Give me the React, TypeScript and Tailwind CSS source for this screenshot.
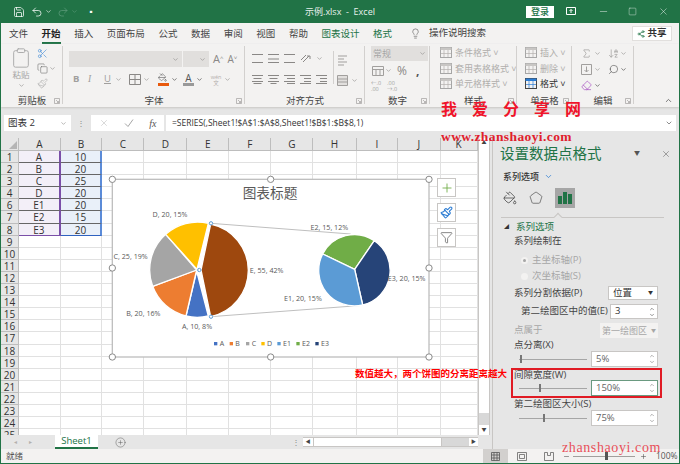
import React from "react";
import {
  ArrowDownAZ,
  ChevronDown,
  ChevronUp,
  CirclePlus,
  Clipboard,
  Copy,
  Eraser,
  Filter,
  Lightbulb,
  Minus,
  PaintBucket,
  Paintbrush,
  Pentagon,
  Plus,
  Redo2,
  Save,
  Scissors,
  Search,
  Share2,
  Sigma,
  Square,
  Undo2,
  X,
} from "lucide-react";

const tabs = ["文件", "开始", "插入", "页面布局", "公式", "数据", "审阅", "视图", "帮助", "图表设计", "格式"];
const columns = ["A", "B", "C", "D", "E", "F", "G", "H", "I", "J", "K"];
const rows = [1, 2, 3, 4, 6, 7, 8, 9, 10, 11, 12, 13, 14, 15, 16, 17, 18, 19, 20, 21, 22, 23, 24, 25];
const data = [
  ["A", "10"],
  ["B", "20"],
  ["C", "25"],
  ["D", "20"],
  ["E1", "20"],
  ["E2", "15"],
  ["E3", "20"],
];
const legend = [
  { name: "A", color: "#4472c4", x: 342 },
  { name: "B", color: "#ed7d31", x: 389 },
  { name: "C", color: "#a5a5a5", x: 438 },
  { name: "D", color: "#ffc000", x: 484 },
  { name: "E1", color: "#5b9bd5", x: 532 },
  { name: "E2", color: "#70ad47", x: 589 },
  { name: "E3", color: "#264478", x: 646 },
];
const labels = [
  { text: "D, 20, 15%", x: 210, y: 142 },
  { text: "C, 25, 19%", x: 92, y: 267 },
  { text: "B, 20, 16%", x: 130, y: 439 },
  { text: "A, 10, 8%", x: 291, y: 477 },
  { text: "E, 55, 42%", x: 500, y: 309 },
  { text: "E2, 15, 12%", x: 688, y: 179 },
  { text: "E1, 20, 15%", x: 609, y: 392 },
  { text: "E3, 20, 15%", x: 920, y: 332 },
];
const handles = [
  [37, 28],
  [512, 28],
  [987, 28],
  [37, 294],
  [987, 294],
  [37, 561],
  [512, 561],
  [987, 561],
];

// 水平线条图标（对齐方式那一组）
const Lines = ({ widths, right }: { widths: number[]; right?: boolean }) => (
  <svg width="11" height="11" viewBox="0 0 11 11" className="text-[#8a8886]">
    {widths.map((w, i) => (
      <rect
        key={i}
        x={right ? 11 - w : (11 - w) / 2}
        y={1 + i * (9 / Math.max(widths.length - 1, 1)) - (i === widths.length - 1 ? 1 : 0)}
        width={w}
        height="1"
        fill="currentColor"
      />
    ))}
  </svg>
);

const Caret = ({ className = "" }: { className?: string }) => (
  <ChevronDown size={7} strokeWidth={2} className={`text-[#8a8886] shrink-0 ${className}`} />
);

const Launcher = () => (
  <svg width="6" height="6" viewBox="0 0 6 6" className="absolute right-[3px] bottom-[3px] text-[#a19f9d]">
    <path d="M0.5 0.5H5.5V5.5H0.5ZM2 2L4.5 4.5M4.5 3V4.5H3" fill="none" stroke="currentColor" strokeWidth="0.7" />
  </svg>
);

const Group = ({ label, width, children }: { label: string; width: string; children: React.ReactNode }) => (
  <div className={`relative flex flex-col shrink-0 ${width}`}>
    <div className="flex-1 min-h-0">{children}</div>
    <div className="h-[12px] text-center text-[9.5px] leading-[12px] text-[#444]">{label}</div>
    <Launcher />
    <div className="absolute right-0 top-[2px] bottom-[3px] w-px bg-[#d2d0ce]" />
  </div>
);

const StyleRow = ({ label, dark }: { label: string; dark?: boolean }) => (
  <div className={`flex items-center h-[15.5px] gap-[3px] text-[9px] ${dark ? "text-[#333]" : "text-[#b0aeac]"}`}>
    <svg width="12" height="11" viewBox="0 0 12 11" className="shrink-0">
      <rect x="0.5" y="0.5" width="11" height="10" fill="none" stroke={dark ? "#444" : "#a6a6a6"} />
      <rect x="0.5" y="0.5" width="11" height="2.5" fill={dark ? "#2b7cd3" : "#c8c6c4"} />
      <path d="M4 3V10M8 3V10M1 6.5H11" stroke={dark ? "#2b7cd3" : "#b3b0ad"} strokeWidth="0.7" />
    </svg>
    <span className="whitespace-nowrap">{label}</span>
  </div>
);

const Spinner = ({ value, active }: { value: string; active?: boolean }) => (
  <div
    className={`flex items-center justify-between h-[16px] w-[67px] bg-white border pl-[4px] pr-[2px] text-[9.5px] text-[#666] ${
      active ? "border-[#6a9a80]" : "border-[#c8c6c4]"
    }`}
  >
    <span>{value}</span>
    <div className="flex flex-col text-[#666]">
      <ChevronUp size={6} strokeWidth={2} />
      <ChevronDown size={6} strokeWidth={2} />
    </div>
  </div>
);

const Slider = ({ thumb }: { thumb: string }) => (
  <div className="relative ml-[5px] w-[68px] h-[16px] flex items-center">
    <div className="w-full h-px bg-[#a6a6a6]" />
    <div className={`absolute top-[4px] h-[8px] w-[2px] bg-[#777] ${thumb}`} />
  </div>
);

const Chart = () => (
  <div className="absolute left-[99px] top-[170px] w-[356px] h-[200px]">
    <svg width="350" height="200" viewBox="0 0 1050 600" className="absolute left-0 top-0">
      <rect x="37" y="28" width="950" height="533" fill="#fff" stroke="#bfbfbf" strokeWidth="4" />
      <text x="510" y="85" textAnchor="middle" fontSize="41" fill="#595959">
        图表标题
      </text>
      <path d="M333 160L752 192M333 440L788 406" stroke="#bfbfbf" strokeWidth="3" fill="none" />
      <g stroke="#fff" strokeWidth="4" strokeLinejoin="round">
        <path d="M290 303L258 438A142 142 0 0 0 325 438Z" fill="#4472c4" />
        <path d="M290 300L158 349A142 142 0 0 0 258 438Z" fill="#ed7d31" />
        <path d="M290 300L197 193A142 142 0 0 0 158 349Z" fill="#a5a5a5" />
        <path d="M291 298L325 160A142 142 0 0 0 197 193Z" fill="#ffc000" />
        <path d="M303 300L332 162A142 142 0 0 1 332 440Z" fill="#9e480e" />
        <path d="M764 298L668 252A107 107 0 0 1 823 212Z" fill="#70ad47" />
        <path d="M764 298L823 212A107 107 0 0 1 788 405Z" fill="#264478" />
        <path d="M764 298L788 405A107 107 0 0 1 668 252Z" fill="#5b9bd5" />
      </g>
      {labels.map((l) => (
        <text key={l.text} x={l.x} y={l.y} textAnchor="middle" fontSize="21.5" fill="#595959">
          {l.text}
        </text>
      ))}
      {legend.map((l) => (
        <g key={l.name}>
          <rect x={l.x} y="516" width="10" height="10" fill={l.color} />
          <text x={l.x + 17} y="527" fontSize="21" fill="#595959">
            {l.name}
          </text>
        </g>
      ))}
      {[
        [333, 160],
        [333, 440],
        [298, 300],
      ].map(([cx, cy]) => (
        <circle key={`${cx}-${cy}`} cx={cx} cy={cy} r="5" fill="#fff" stroke="#5b9bd5" strokeWidth="3" />
      ))}
      {handles.map(([cx, cy]) => (
        <circle key={`${cx}-${cy}`} cx={cx} cy={cy} r="9.5" fill="#fff" stroke="#8a8a8a" strokeWidth="3" />
      ))}
    </svg>
    <div className="absolute left-[337px] top-[8px] flex flex-col gap-[6px]">
      <div className="flex items-center justify-center w-[19px] h-[19px] bg-white border border-[#c8c6c4]">
        <Plus size={14} strokeWidth={1.5} className="text-[#70ad47]" />
      </div>
      <div className="flex items-center justify-center w-[19px] h-[19px] bg-white border border-[#c8c6c4]">
        <Paintbrush size={13} strokeWidth={2} className="text-[#2b7cd3]" />
      </div>
      <div className="flex items-center justify-center w-[19px] h-[19px] bg-white border border-[#c8c6c4]">
        <Filter size={13} strokeWidth={1.3} className="text-[#555]" />
      </div>
    </div>
  </div>
);

const App: React.FC = () => {
  return (
    <div className="relative flex flex-col w-[680px] h-[464px] overflow-hidden bg-[#e6e6e6] border-x border-b border-[#217346] font-['Open_Sans','Noto_Sans_CJK_SC',sans-serif] text-[#444]">
      {/* 标题栏 */}
      <div className="relative flex items-center h-[23px] shrink-0 -mx-px bg-[#217346] text-white">
        <Save size={12} strokeWidth={1.5} className="ml-[13px]" />
        <Undo2 size={12} strokeWidth={1.5} className="ml-[6px]" />
        <ChevronDown size={7} className="ml-[2px]" />
        <Redo2 size={12} strokeWidth={1.5} className="ml-[5px] text-[#5d9b7b]" />
        <ChevronDown size={7} className="ml-[2px] text-[#5d9b7b]" />
        <span className="ml-[9px] text-[8px] leading-none">▪</span>
        <div className="absolute left-0 right-0 text-center text-[9px] text-[#e8f0ec]">示例.xlsx&nbsp; -&nbsp; Excel</div>
        <div className="ml-auto flex items-center">
          <div className="flex items-center justify-center w-[28px] h-[12px] mr-[12px] bg-white text-[9px] font-medium text-[#217346]">
            登录
          </div>
          <svg width="10" height="9" viewBox="0 0 10 9" className="mr-[22px]">
            <path d="M0.5 0.5H9.5V7.5H0.5ZM5 6V2.5M3.5 4L5 2.5L6.5 4" fill="none" stroke="#fff" strokeWidth="1" />
          </svg>
          <Minus size={11} strokeWidth={1} className="mr-[19px]" />
          <Square size={9} strokeWidth={1} className="mr-[21px]" />
          <X size={11} strokeWidth={1} className="mr-[11px]" />
        </div>
      </div>

      {/* 选项卡 */}
      <div className="flex items-center h-[21px] shrink-0 bg-[#f3f2f1] pl-[8px] text-[9.5px]">
        <div className="flex gap-[13.6px]">
          {tabs.map((t) => (
            <span
              key={t}
              className={`relative leading-[21px] ${t === "开始" ? "font-bold text-[#222]" : ""} ${
                t === "图表设计" || t === "格式" ? "text-[#217346]" : ""
              }`}
            >
              {t}
              {t === "开始" && <span className="absolute left-0 right-0 bottom-0 h-[2px] bg-[#217346]" />}
            </span>
          ))}
        </div>
        <Lightbulb size={11} strokeWidth={1.2} className="ml-[18px]" />
        <span className="ml-[8px]">操作说明搜索</span>
        <div className="ml-auto mr-[7px] flex items-center justify-center gap-[2px] w-[40px] h-[15px] bg-white border border-[#e1dfdd] font-bold text-[#333]">
          <Share2 size={8} className="text-[#217346]" />
          共享
        </div>
      </div>

      {/* 功能区 */}
      <div className="relative flex h-[63px] shrink-0 bg-[#f3f2f1] shadow-[0_1px_2px_#c8c6c4]">
        <Group label="剪贴板" width="w-[62px]">
          <div className="flex pl-[10px] pt-[3px] text-[#a6a6a6]">
            <div className="flex flex-col items-center w-[20px]">
              <Clipboard size={22} strokeWidth={1} />
              <span className="text-[8.5px] leading-[12px]">粘贴</span>
              <Caret className="mt-[1px]" />
            </div>
            <div className="flex flex-col gap-[4px] ml-[6px] pt-[1px] text-[#666]">
              <Scissors size={11} strokeWidth={1.2} className="text-[#2b7cd3]" />
              <div className="flex items-center gap-[1px]">
                <Copy size={11} strokeWidth={1.2} />
                <Caret />
              </div>
              <Paintbrush size={11} strokeWidth={1.2} className="text-[#a6a6a6]" />
            </div>
          </div>
        </Group>
        <Group label="字体" width="w-[182px]">
          <div className="pl-[6px] pt-[7px]">
            <div className="flex items-center gap-[1px]">
              <div className="flex items-center justify-end w-[113px] h-[16px] pr-[3px] bg-[#e1dfdd]">
                <Caret />
              </div>
              <div className="flex items-center justify-end w-[26px] h-[16px] pr-[3px] bg-[#e1dfdd]">
                <Caret />
              </div>
              <span className="ml-[3px] text-[11px] text-[#8a8886]">
                A<sup className="text-[6px]">^</sup>
              </span>
              <span className="ml-[3px] text-[10px] text-[#8a8886]">
                A<sup className="text-[6px]">˅</sup>
              </span>
            </div>
            <div className="flex items-center mt-[4px] h-[16px] text-[#a19f9d]">
              <span className="ml-[4px] w-[15px] text-[9.5px] font-bold">B</span>
              <span className="w-[16px] text-[9.5px] italic font-['Liberation_Serif',serif]">I</span>
              <span className="w-[11px] text-[9.5px] underline">U</span>
              <Caret />
              <svg width="12" height="11" viewBox="0 0 12 11" className="ml-[7px]">
                <path d="M0.5 0.5H11.5V10.5H0.5ZM6 0.5V10.5M0.5 5.5H11.5" fill="none" stroke="#8a8886" />
              </svg>
              <Caret className="ml-[2px]" />
              <div className="relative ml-[8px] w-[11px] h-[13px]">
                <PaintBucket size={9} strokeWidth={1.5} className="text-[#555]" />
                <div className="absolute left-0 right-0 bottom-0 h-[3px] bg-[#e8590c]" />
              </div>
              <ChevronDown size={7} strokeWidth={2} className="ml-[2px] text-[#333]" />
              <div className="relative ml-[5px] w-[11px] h-[13px] text-center text-[10px] leading-[10px] text-[#555]">
                A
                <div className="absolute left-0 right-0 bottom-0 h-[3px] bg-[#999]" />
              </div>
              <ChevronDown size={7} strokeWidth={2} className="ml-[2px] text-[#333]" />
              <span className="ml-[7px] w-[12px] text-center text-[5.5px] leading-[6px] text-[#b3b0ad]">
                wén
                <br />文
              </span>
              <Caret className="ml-[2px]" />
            </div>
          </div>
        </Group>
        <Group label="对齐方式" width="w-[120px]">
          <div className="flex pt-[9px] pl-[7px]">
            <div className="flex flex-col gap-[10px] w-[81px]">
              <div className="flex items-center gap-[5px] h-[11px]">
                <Lines widths={[11, 11]} />
                <Lines widths={[11, 11, 11]} />
                <Lines widths={[11, 11]} />
                <svg width="11" height="11" viewBox="0 0 11 11">
                  <path d="M1 7L6 2M3 9L9 3M7 3H10V6" fill="none" stroke="#8a8886" />
                </svg>
                <Caret />
              </div>
              <div className="flex items-center gap-[5px] h-[11px]">
                <Lines widths={[11, 8, 11, 8]} />
                <Lines widths={[11, 8, 11, 6]} />
                <Lines widths={[11, 8, 11, 8]} right />
                <Lines widths={[11, 7, 7, 11]} right />
                <Lines widths={[11, 7, 7, 11]} right />
              </div>
            </div>
            <div className="w-px h-[33px] -mt-[2px] bg-[#d2d0ce]" />
            <div className="flex flex-col gap-[8px] pl-[3px] pt-[1px]">
              <svg width="11" height="13" viewBox="0 0 11 13">
                <path d="M1 2H10M1 5H7M1 8H10M1 11H7" stroke="#a19f9d" />
              </svg>
              <div className="flex items-center gap-[3px]">
                <svg width="11" height="11" viewBox="0 0 11 11">
                  <path d="M0.5 0.5H10.5V10.5H0.5ZM0.5 4H10.5M0.5 7H10.5" fill="#e1dfdd" stroke="#a19f9d" />
                </svg>
                <Caret />
              </div>
            </div>
          </div>
        </Group>
        <Group label="数字" width="w-[65px]">
          <div className="pt-[2px] pl-[6px]">
            <div className="flex items-center justify-between w-[57px] h-[15px] px-[2px] bg-[#e1dfdd] text-[9px] text-[#a6a6a6]">
              常规
              <Caret />
            </div>
            <div className="flex items-center h-[17px] mt-[1px] text-[#8a8886]">
              <svg width="12" height="10" viewBox="0 0 12 10" className="ml-[1px]">
                <path d="M0.5 0.5H11.5V9.5H0.5ZM0.5 3.5H11.5M4 3.5V9.5M8 3.5V9.5" fill="none" stroke="#a19f9d" />
              </svg>
              <Caret className="ml-[1px]" />
              <span className="ml-[5px] text-[12px] leading-none">%</span>
              <span className="ml-[9px] text-[12px] font-bold leading-none text-[#555]">,</span>
            </div>
            <div className="flex items-center gap-[6px] h-[14px] text-[5.5px] leading-[6px] text-[#a19f9d]">
              <span>
                ←.0
                <br />
                .00
              </span>
              <span>
                .00
                <br />
                →.0
              </span>
            </div>
          </div>
        </Group>
        <Group label="样式" width="w-[87px]">
          <div className="pl-[10px] pt-[1px]">
            <StyleRow label="条件格式 ˅" />
            <StyleRow label="套用表格格式 ˅" />
            <StyleRow label="单元格样式 ˅" />
          </div>
        </Group>
        <Group label="单元格" width="w-[55px]">
          <div className="pl-[8px] pt-[1px]">
            <StyleRow label="插入 ˅" />
            <StyleRow label="删除 ˅" />
            <StyleRow label="格式 ˅" dark />
          </div>
        </Group>
        <Group label="编辑" width="w-[62px]">
          <div className="grid grid-cols-2 gap-y-[4px] pl-[9px] pt-[3px] text-[#8a8886]">
            <div className="flex items-center gap-[2px] h-[12px]">
              <Sigma size={11} strokeWidth={1.2} />
              <Caret />
            </div>
            <div className="flex items-center gap-[1px] h-[12px]">
              <ArrowDownAZ size={11} strokeWidth={1.2} />
              <Caret />
            </div>
            <div className="flex items-center gap-[2px] h-[12px]">
              <svg width="11" height="11" viewBox="0 0 11 11">
                <path d="M0.5 0.5H10.5V10.5H0.5ZM5.5 2.5V8M3.5 6L5.5 8L7.5 6" fill="none" stroke="#a19f9d" />
              </svg>
              <Caret />
            </div>
            <div className="flex items-center gap-[1px] h-[12px]">
              <Search size={11} strokeWidth={1.2} className="-scale-x-100 text-[#444]" />
              <ChevronDown size={7} strokeWidth={2} className="text-[#333]" />
            </div>
            <div className="flex items-center gap-[2px] h-[12px]">
              <Eraser size={11} strokeWidth={1.5} className="text-[#a64dc0]" />
              <ChevronDown size={7} strokeWidth={2} className="text-[#333]" />
            </div>
          </div>
        </Group>
        <ChevronUp size={9} className="absolute right-[6px] bottom-[2px] text-[#555]" />
      </div>

      {/* 编辑栏 */}
      <div className="flex items-center h-[16px] mt-[8px] shrink-0 pl-[3px] pr-[3px]">
        <div className="flex items-center justify-between w-[67px] h-full px-[4px] bg-white text-[9.5px] text-[#333]">
          图表 2
          <Caret />
        </div>
        <div className="w-[20px] text-center text-[8px] leading-none text-[#8a8886]">⋮</div>
        <div className="flex items-center justify-around w-[73px] h-full bg-white text-[#a6a6a6]">
          <X size={10} strokeWidth={1} />
          <svg width="10" height="10" viewBox="0 0 10 10">
            <path d="M1 5.5L4 8.5L9 1.5" fill="none" stroke="#a6a6a6" />
          </svg>
          <span className="font-['Liberation_Serif',serif] italic text-[10px] text-[#555]">fx</span>
        </div>
        <div className="flex items-center justify-between flex-1 h-full ml-[2px] pl-[6px] pr-[3px] bg-white text-[8.5px] text-[#333]">
          =SERIES(,Sheet1!$A$1:$A$8,Sheet1!$B$1:$B$8,1)
          <ChevronDown size={8} strokeWidth={2} className="text-[#555]" />
        </div>
      </div>

      {/* 工作表和窗格 */}
      <div className="flex flex-1 min-h-0 mt-[7px]">
        <div className="flex flex-col w-[490px] shrink-0">
          <div className="flex h-[297px] shrink-0">
            <div className="grid w-[477px] h-full overflow-hidden bg-white content-start grid-cols-[18px_41.6px_41.7px_42px_43px_42px_42px_42px_43.4px_41.6px_42.4px_37px] grid-rows-[13px] auto-rows-[12.1px] text-[10px] leading-[12px]">
              <div className="relative bg-[#e6e6e6] border-r border-b border-[#bdbdbd]">
                <div className="absolute right-[1px] bottom-[1px] w-0 h-0 border-l-[8px] border-t-[8px] border-l-transparent border-t-transparent border-r-0 border-b-[8px] border-b-[#b5b5b5]" />
              </div>
              {columns.map((c) => (
                <div key={c} className="text-center bg-[#e6e6e6] border-r border-b border-[#bdbdbd] text-[#333]">
                  {c}
                </div>
              ))}
              {rows.map((r, i) => (
                <React.Fragment key={r}>
                  <div className="text-center bg-[#e6e6e6] border-r border-b border-[#bdbdbd] text-[#333]">{r}</div>
                  {columns.map((c, j) => {
                    const cell = data[i]?.[j];
                    if (cell !== undefined) {
                      return (
                        <div
                          key={c}
                          className={`text-center text-[#333] border-b border-r-2 ${
                            j === 0
                              ? `bg-[#f3eff8] border-r-[#7a4fa8] ${i === 6 ? "border-b-[#7a4fa8]" : "border-b-[#666]"}`
                              : `bg-[#e9f0f9] border-r-[#5b8bd8] ${i === 6 ? "border-b-[#2f62c0]" : "border-b-[#666]"}`
                          }`}
                        >
                          {cell}
                        </div>
                      );
                    }
                    return <div key={c} className="border-r border-b border-[#e1e1e1]" />;
                  })}
                </React.Fragment>
              ))}
            </div>
            {/* 垂直滚动条 */}
            <div className="flex flex-col w-[12px] h-full bg-white border-x border-[#c8c6c4]">
              <div className="flex items-center justify-center h-[9px] text-[5px] text-[#444]">▲</div>
              <div className="flex-1 bg-white" />
              <div className="h-[12px] bg-[#d8d8d8]" />
              <div className="flex items-center justify-center h-[10px] text-[5px] text-[#444]">▼</div>
            </div>
          </div>
          {/* 工作表标签 */}
          <div className="flex items-center flex-1 min-h-0 text-[#b3b0ad]">
            <div className="flex w-[54px] pl-[13px] gap-[10px] text-[6px]">
              <span className="w-[5px]">◂</span>
              <span className="w-[5px]">▸</span>
            </div>
            <div className="flex items-center justify-center w-[43px] h-full bg-white border-b-2 border-[#217346] text-[9.5px] text-[#217346]">
              Sheet1
            </div>
            <CirclePlus size={11} strokeWidth={1} className="ml-[17px] text-[#555]" />
            <span className="ml-[166px] w-[4px] text-center text-[8px] text-[#8a8886]">⋮</span>
            <div className="ml-[7px] flex items-center w-[175px] h-[10px] bg-[#d8d8d8] border-y border-[#c8c6c4] text-[5px] text-[#444]">
              <span className="w-[10px] text-center bg-white">◀</span>
              <div className="w-[129px] h-full bg-white border-l border-r border-[#c8c6c4]" />
              <div className="flex-1" />
              <span className="w-[9px] text-center bg-white">▶</span>
            </div>
          </div>
        </div>

        {/* 设置数据点格式窗格 */}
        <div className="relative flex-1 ml-[1px] pl-[21px] pr-[21px] border-l border-[#c8c6c4] text-[9.5px] text-[#444]">
          <div className="flex items-center h-[31px] -ml-[14px] -mr-[13px]">
            <span className="text-[14.5px] text-[#217346]">设置数据点格式</span>
            <span className="ml-auto text-[6px] text-[#555]">▼</span>
            <X size={10} strokeWidth={1.2} className="ml-[21px] text-[#555]" />
          </div>
          <div className="flex items-center gap-[5px] h-[15px] -ml-[11px] text-[9px] font-medium text-[#333]">
            系列选项
            <ChevronDown size={9} className="text-[#2b7cd3]" />
          </div>
          <div className="flex items-center gap-[12px] h-[20px] mt-[4px] -ml-[11px]">
            <PaintBucket size={14} strokeWidth={1.2} className="text-[#333]" />
            <Pentagon size={14} strokeWidth={1} className="text-[#333]" />
            <div className="flex items-end justify-center gap-[1px] w-[20px] h-[20px] pb-[4px] bg-[#a6a6a6]">
              <div className="w-[4px] h-[8px] bg-[#217346]" />
              <div className="w-[4px] h-[12px] bg-[#217346]" />
              <div className="w-[4px] h-[10px] bg-[#217346]" />
            </div>
          </div>
          <div className="relative h-px mt-[9px] -ml-[13px] -mr-[6px] bg-[#c8c6c4]">
            <div className="absolute left-[54px] -top-[3px] w-[6px] h-[6px] rotate-45 border-l border-t border-[#c8c6c4] bg-[#e6e6e6]" />
          </div>
          <div className="flex items-center gap-[7px] h-[14px] mt-[2px] -ml-[10px] text-[#217346]">
            <span className="text-[5px] text-[#333]">◢</span>
            系列选项
          </div>
          <div className="flex items-center h-[14px]">系列绘制在</div>
          <div className="flex items-center gap-[4px] h-[14px] mt-[5px] ml-[7px] text-[#a6a6a6]">
            <span className="flex items-center justify-center w-[7px] h-[7px] rounded-full bg-[#f3f2f1]">
              <span className="w-[3px] h-[3px] rounded-full bg-[#a6a6a6]" />
            </span>
            主坐标轴(P)
          </div>
          <div className="flex items-center gap-[4px] h-[14px] mt-[2px] ml-[7px] text-[#a6a6a6]">
            <span className="w-[7px] h-[7px] rounded-full bg-[#f3f2f1]" />
            次坐标轴(S)
          </div>
          <div className="flex items-center justify-between h-[14px] mt-[3px]">
            系列分割依据(P)
            <div className="flex items-center justify-between w-[50px] h-[14px] px-[4px] bg-white border border-[#c8c6c4] text-[#333]">
              位置
              <span className="text-[5px]">▼</span>
            </div>
          </div>
          <div className="flex items-center justify-between h-[15px] mt-[4px] pl-[7px]">
            第二绘图区中的值(E)
            <div className="flex items-center justify-between w-[48px] h-[15px] pl-[4px] pr-[2px] bg-white border border-[#c8c6c4] text-[#333]">
              3
              <div className="flex flex-col">
                <ChevronUp size={6} strokeWidth={2} />
                <ChevronDown size={6} strokeWidth={2} />
              </div>
            </div>
          </div>
          <div className="flex items-center justify-between h-[15px] mt-[4px] text-[#a6a6a6]">
            点属于
            <div className="flex items-center justify-between w-[58px] h-[15px] px-[2px] bg-[#f3f2f1] text-[9px] whitespace-nowrap">
              第一绘图区
              <span className="text-[5px]">▼</span>
            </div>
          </div>
          <div className="flex items-center h-[12px] mt-[1px]">点分离(X)</div>
          <div className="flex items-center justify-between h-[16px]">
            <Slider thumb="left-[1px]" />
            <Spinner value="5%" />
          </div>
          <div className="h-[30px] mt-[1px] -ml-[3px] -mr-[4px] pl-[1px] pr-[2px] border-2 border-[#e01b24] leading-[10px]">
            <div className="h-[10px]">间隙宽度(W)</div>
            <div className="flex items-center justify-between h-[16px]">
              <Slider thumb="left-[20px]" />
              <Spinner value="150%" active />
            </div>
          </div>
          <div className="flex items-center h-[12px]">第二绘图区大小(S)</div>
          <div className="flex items-center justify-between h-[16px]">
            <Slider thumb="left-[24px]" />
            <Spinner value="75%" />
          </div>
        </div>
      </div>

      {/* 状态栏 */}
      <div className="flex items-center h-[14px] shrink-0 bg-[#f3f2f1] pl-[5px] text-[8.5px] text-[#555]">
        就绪
        <div className="ml-auto flex items-center h-full">
          <div className="flex items-center justify-center w-[25px] h-full bg-[#d2d0ce]">
            <svg width="9" height="9" viewBox="0 0 9 9">
              <path d="M0.5 0.5H8.5V8.5H0.5ZM3 0.5V8.5M6 0.5V8.5M0.5 3H8.5M0.5 6H8.5" fill="none" stroke="#555" strokeWidth="0.8" />
            </svg>
          </div>
          <svg width="10" height="9" viewBox="0 0 10 9" className="ml-[9px]">
            <path d="M0.5 0.5H9.5V8.5H0.5ZM2.5 2.5H7.5V6.5H2.5Z" fill="none" stroke="#666" strokeWidth="0.8" />
          </svg>
          <svg width="10" height="9" viewBox="0 0 10 9" className="ml-[17px]">
            <path d="M0.5 8.5V0.5H3.5V3.5H6.5V0.5H9.5V8.5Z" fill="none" stroke="#666" strokeWidth="0.8" />
          </svg>
          <Minus size={7} className="ml-[9px]" />
          <div className="relative w-[62px] h-px ml-[3px] bg-[#a19f9d]">
            <div className="absolute left-[32px] -top-[4px] w-[3px] h-[8px] bg-[#555]" />
          </div>
          <Plus size={7} className="ml-[5px]" />
          <span className="ml-[9px] w-[22px] mr-[1px]">100%</span>
        </div>
      </div>

      <Chart />

      {/* 水印和批注 */}
      <div className="absolute left-[440px] top-[97px] flex gap-[15px] text-[16px] leading-[24px] font-bold text-[#f0142a]">
        <span>我</span>
        <span>爱</span>
        <span>分</span>
        <span>享</span>
        <span>网</span>
      </div>
      <div className="absolute left-[440px] top-[129px] font-['Liberation_Serif',serif] text-[13.5px] leading-[16px] font-bold tracking-[0.4px] text-[#e0202c]">
        www.zhanshaoyi.com
      </div>
      <div className="absolute left-[354px] top-[367px] text-[9.5px] leading-[14px] font-bold whitespace-nowrap text-[#ff0000]">
        数值越大，两个饼图的分离距离越大
      </div>
      <div className="absolute left-[561px] top-[440px] font-['Liberation_Serif',serif] text-[14px] leading-[16px] tracking-[0.6px] text-[#e8505a]">
        zhanshaoyi.com
      </div>
    </div>
  );
};

export default App;
